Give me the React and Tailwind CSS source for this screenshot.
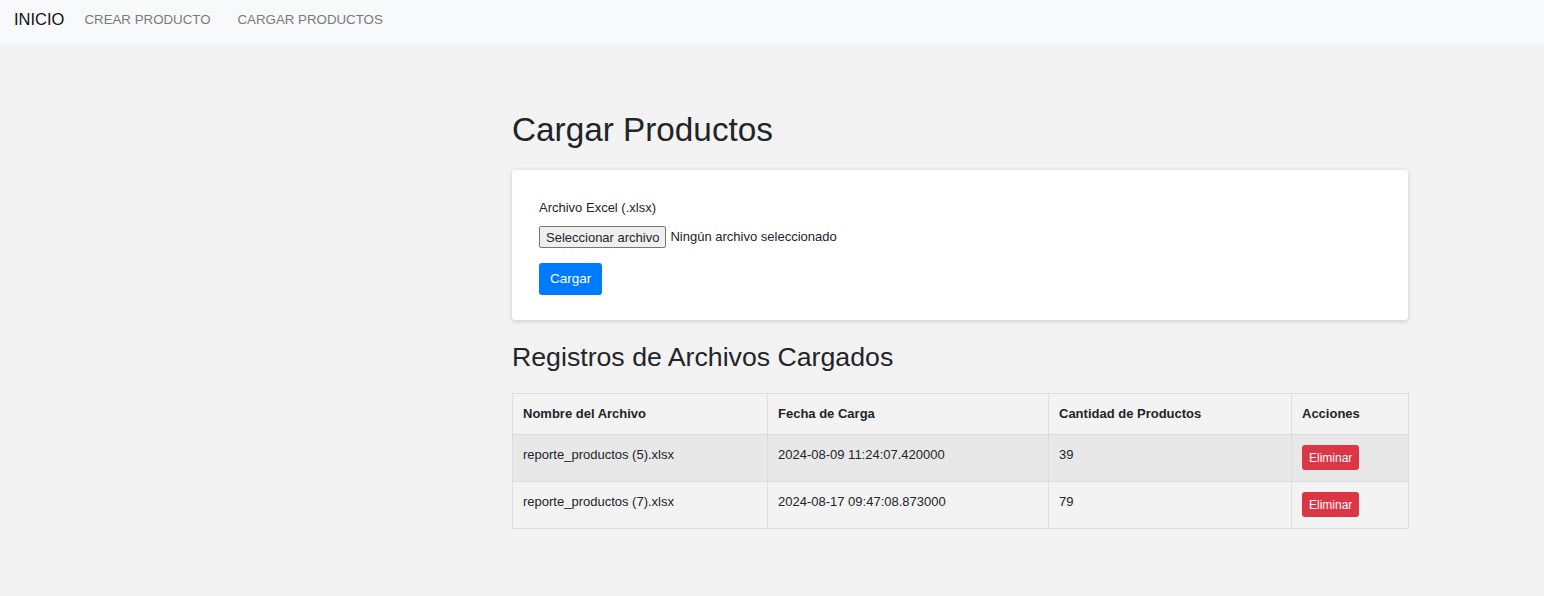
export default function App() {
  const registros = [
    { nombre: "reporte_productos (5).xlsx", fecha: "2024-08-09 11:24:07.420000", cantidad: 39 },
    { nombre: "reporte_productos (7).xlsx", fecha: "2024-08-17 09:47:08.873000", cantidad: 79 },
  ];

  return (
    <div className="min-h-[596px] bg-[#f3f3f3] text-[#212529] font-['Liberation_Sans',Arial,sans-serif]">
      {/* Navbar */}
      <nav className="h-[44px] bg-[#f8f9fa] flex items-center pl-[14px] pb-[5px]">
        <span className="text-[16.5px] text-[#111] mr-[20px]">INICIO</span>
        <span className="text-[13.3px] text-[#7a7a7a] mr-[27px]">CREAR PRODUCTO</span>
        <span className="text-[13.3px] text-[#7a7a7a]">CARGAR PRODUCTOS</span>
      </nav>

      <div className="ml-[512px] w-[896px] pt-[66px]">
        <h1 className="text-[33.3px] leading-[40px] mb-[20px]">Cargar Productos</h1>

        {/* Upload card */}
        <div className="bg-white rounded-[3px] shadow-[0_1px_5px_rgba(0,0,0,0.18)] h-[150px] px-[27px] pt-[30px]">
          <label className="block text-[13px] leading-[16px] mb-[10px]">Archivo Excel (.xlsx)</label>
          <div className="flex items-center text-[13px]">
            <button
              type="button"
              className="h-[22px] px-[6px] bg-[#efefef] border border-[#767676] rounded-[2px] text-[13px] leading-none"
            >
              Seleccionar archivo
            </button>
            <span className="ml-[4px]">Ningún archivo seleccionado</span>
          </div>
          <button
            type="button"
            className="mt-[15px] h-[32px] px-[11px] bg-[#007bff] text-white text-[13.5px] rounded-[3px]"
          >
            Cargar
          </button>
        </div>

        <h2 className="text-[26.7px] leading-[34px] mt-[20px] mb-[19px]">Registros de Archivos Cargados</h2>

        {/* Table */}
        <table className="w-full border-collapse text-[13px] table-fixed">
          <colgroup>
            <col className="w-[255px]" />
            <col className="w-[281px]" />
            <col className="w-[243px]" />
            <col className="w-[117px]" />
          </colgroup>
          <thead>
            <tr className="h-[41px]">
              <th className="border border-[#dcdcdc] text-left font-bold px-[10px]">Nombre del Archivo</th>
              <th className="border border-[#dcdcdc] text-left font-bold px-[10px]">Fecha de Carga</th>
              <th className="border border-[#dcdcdc] text-left font-bold px-[10px]">Cantidad de Productos</th>
              <th className="border border-[#dcdcdc] text-left font-bold px-[10px]">Acciones</th>
            </tr>
          </thead>
          <tbody>
            {registros.map((r, i) => (
              <tr key={r.nombre} className={`h-[47px] ${i === 0 ? "bg-[#e8e8e8]" : "bg-[#f3f3f3]"}`}>
                <td className="border border-[#dcdcdc] align-top px-[10px] pt-[10px] leading-[20px]">{r.nombre}</td>
                <td className="border border-[#dcdcdc] align-top px-[10px] pt-[10px] leading-[20px]">{r.fecha}</td>
                <td className="border border-[#dcdcdc] align-top px-[10px] pt-[10px] leading-[20px]">{r.cantidad}</td>
                <td className="border border-[#dcdcdc] align-top px-[10px] pt-[10px]">
                  <button
                    type="button"
                    className="h-[25px] px-[7px] bg-[#dc3545] text-white text-[12px] rounded-[3px]"
                  >
                    Eliminar
                  </button>
                </td>
              </tr>
            ))}
          </tbody>
        </table>
      </div>
    </div>
  );
}
